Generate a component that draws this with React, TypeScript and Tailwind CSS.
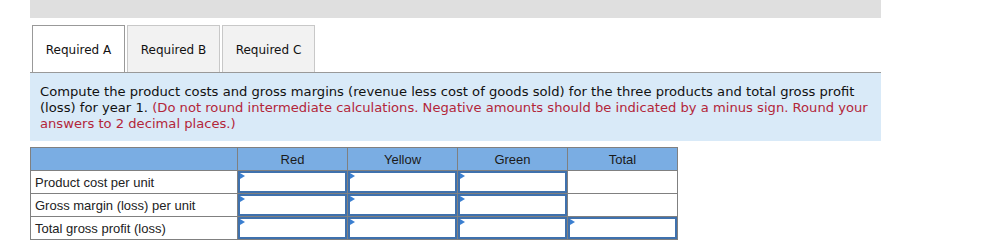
import React from 'react';

const tabs = ['Required A', 'Required B', 'Required C'];
const columns = ['Red', 'Yellow', 'Green', 'Total'];

// which cells take an entry, per row (Red, Yellow, Green, Total)
const rows: { label: string; inputs: boolean[] }[] = [
  { label: 'Product cost per unit', inputs: [true, true, true, false] },
  { label: 'Gross margin (loss) per unit', inputs: [true, true, true, false] },
  { label: 'Total gross profit (loss)', inputs: [true, true, true, true] },
];

const AnswerCell: React.FC<{ editable: boolean }> = ({ editable }) => (
  <td className="relative h-[23px] border border-[#808080] bg-white p-0">
    {editable && (
      <>
        <input
          type="text"
          className="block h-[22px] w-full border-2 border-[#3f71ad] bg-white px-1 text-[12px] outline-none"
        />
        {/* entry marker */}
        <span className="pointer-events-none absolute left-[2px] top-[2px] h-0 w-0 border-y-[3px] border-l-[5px] border-y-transparent border-l-[#3b7fd0]" />
      </>
    )}
  </td>
);

const App: React.FC = () => {
  return (
    <div className="min-h-[248px] bg-white font-['DejaVu_Sans',Verdana,sans-serif]">
      <div className="ml-[30px] w-[851px]">
        <div className="h-[18px] bg-[#dfdfdf]" />

        {/* Tab strip */}
        <div className="mt-[7px] flex gap-[2px] border-b border-[#999] pl-[2px]">
          {tabs.map((tab, i) => (
            <div
              key={tab}
              className={
                i === 0
                  ? 'flex h-[47px] w-[93px] items-center justify-center border border-b-0 border-[#999] bg-white pt-[2px] text-[12px] text-[#111]'
                  : 'flex h-[47px] w-[93px] items-center justify-center border border-b-0 border-[#c8c8c8] bg-[#f2f2f2] pt-[2px] text-[12px] text-[#111]'
              }
            >
              {tab}
            </div>
          ))}
        </div>

        {/* Instructions */}
        <div className="bg-[#d9eaf8] pb-[9px] pl-[10px] pr-[10px] pt-[11px] text-[13.13px] leading-[16px] text-[#111]">
          Compute the product costs and gross margins (revenue less cost of goods sold) for the three products and total gross profit (loss) for year 1.{' '}
          <span className="text-[#b3263a]">
            (Do not round intermediate calculations. Negative amounts should be indicated by a minus sign. Round your answers to 2 decimal places.)
          </span>
        </div>

        {/* Answer grid */}
        <table className="mt-[6px] w-[647px] table-fixed border-collapse font-['Liberation_Sans',Arial,sans-serif] text-[13px] text-[#222]">
          <colgroup>
            <col className="w-[207px]" />
            <col className="w-[110px]" />
            <col className="w-[110px]" />
            <col className="w-[110px]" />
            <col className="w-[110px]" />
          </colgroup>
          <thead>
            <tr className="h-[23px] bg-[#7aade3]">
              <th className="border border-[#808080]" />
              {columns.map((col) => (
                <th key={col} className="border border-[#808080] pt-[1px] text-center font-normal text-[#1a1a1a]">
                  {col}
                </th>
              ))}
            </tr>
          </thead>
          <tbody>
            {rows.map((row) => (
              <tr key={row.label} className="h-[23px]">
                <td className="border border-[#808080] pl-[4px] pt-[1px] text-left">{row.label}</td>
                {row.inputs.map((editable, i) => (
                  <AnswerCell key={i} editable={editable} />
                ))}
              </tr>
            ))}
          </tbody>
        </table>
      </div>
    </div>
  );
};

export default App;
